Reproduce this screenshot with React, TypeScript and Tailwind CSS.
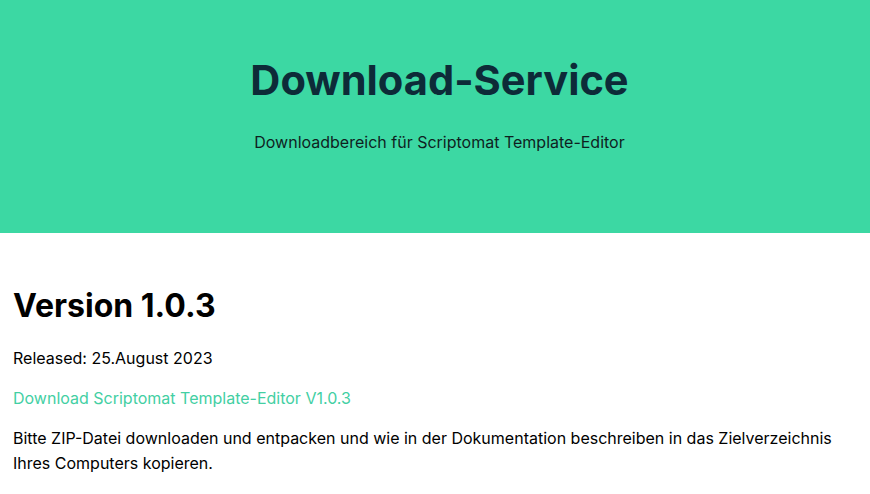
export default function App() {
  return (
    <div className="min-h-screen bg-white font-['Inter',sans-serif] text-black">
      <header className="flex h-[233px] flex-col items-center bg-[#3cd8a3] pl-[9px] pt-[54px]">
        <h1 className="text-[41.6px] font-bold leading-[52px] text-[#0d2b38]">
          Download-Service
        </h1>
        <p className="mt-[24px] text-base leading-6 text-[#0f1f1f]">
          Downloadbereich für Scriptomat Template-Editor
        </p>
      </header>
      <main className="px-[13px] pt-[53px]">
        <h2 className="text-[32px] font-bold leading-[40px]">Version 1.0.3</h2>
        <p className="mt-[20px] text-base leading-6">Released: 25.August 2023</p>
        <a href="#" className="mt-[16px] block text-base leading-6 text-[#43cfa3]">
          Download Scriptomat Template-Editor V1.0.3
        </a>
        <p className="mt-4 text-base leading-[25px]">
          Bitte ZIP-Datei downloaden und entpacken und wie in der Dokumentation beschreiben in das Zielverzeichnis Ihres Computers kopieren.
        </p>
      </main>
    </div>
  );
}
